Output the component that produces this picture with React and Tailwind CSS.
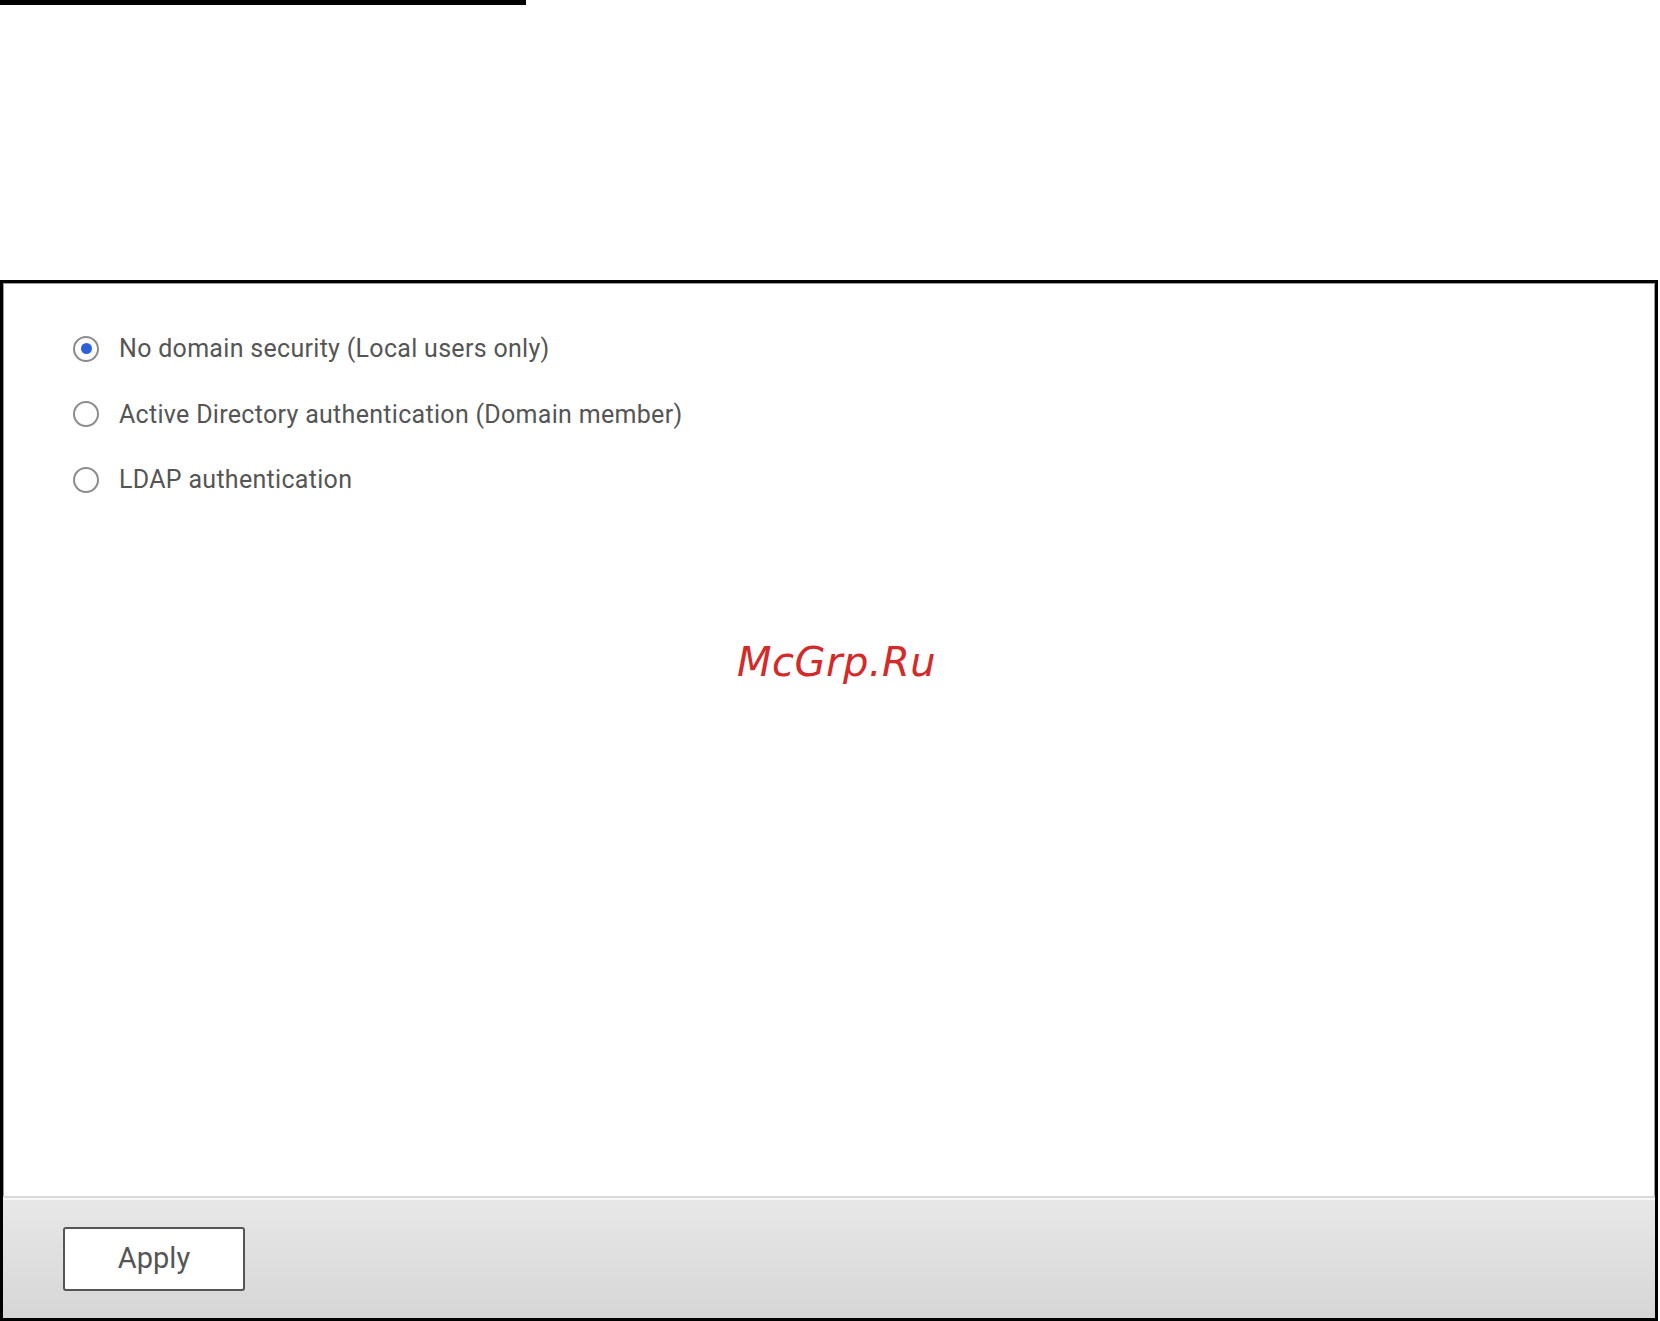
import React, { useState } from "react";

const options = [
  { id: "local", label: "No domain security (Local users only)" },
  { id: "ad", label: "Active Directory authentication (Domain member)" },
  { id: "ldap", label: "LDAP authentication" },
];

export default function App() {
  const [selected, setSelected] = useState("local");

  return (
    <div className="w-[1660px] h-[1321px] bg-white flex flex-col" style={{ fontFamily: "Roboto, 'Liberation Sans', sans-serif" }}>
      {/* top rule */}
      <div className="h-[5px] w-[526px] bg-black" />

      {/* settings panel */}
      <div className="mt-[275px] flex-1 flex flex-col border-[3px] border-black shadow-[inset_0_0_0_1px_#9a9a9a] mr-[2px]">
        <div className="flex-1 flex flex-col pt-[33px] pl-[70px] relative">
          {options.map((opt) => (
            <label
              key={opt.id}
              onClick={() => setSelected(opt.id)}
              className="h-[65.5px] flex items-center gap-[20px] cursor-pointer"
            >
              <span className="w-[26px] h-[26px] rounded-full border-2 border-[#8c8c8c] bg-white flex items-center justify-center">
                {selected === opt.id && (
                  <span className="w-[11px] h-[11px] rounded-full bg-[#2f62d8]" />
                )}
              </span>
              <span className="text-[25px] text-[#555555] tracking-[0.3px]">{opt.label}</span>
            </label>
          ))}

          {/* watermark */}
          <div
            className="absolute left-[734px] top-[349px] text-[40px] italic text-[#d42a2a] tracking-[0.5px]"
            style={{ fontFamily: "'DejaVu Sans', sans-serif" }}
          >
            McGrp.Ru
          </div>
        </div>

        {/* footer */}
        <div className="h-[122px] border-t-2 border-[#d9d9d9] shadow-[inset_0_2px_0_#f7f7f7] bg-gradient-to-b from-[#e8e8e8] to-[#d6d6d6] pl-[60px] pt-[29px]">
          <button className="w-[182px] h-[64px] bg-white border-2 border-[#555555] rounded-[3px] text-[29px] text-[#555555]">
            Apply
          </button>
        </div>
      </div>
    </div>
  );
}
